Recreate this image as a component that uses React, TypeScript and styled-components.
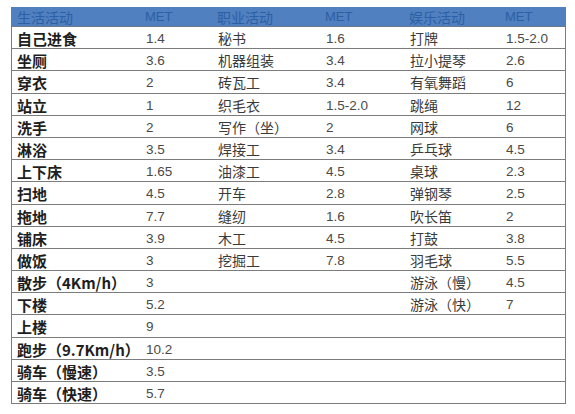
import { createGlobalStyle } from "styled-components";
import styled from "styled-components";

type Row = [string, string, string, string, string, string];

const rows: Row[] = [
  ["自己进食", "1.4", "秘书", "1.6", "打牌", "1.5-2.0"],
  ["坐厕", "3.6", "机器组装", "3.4", "拉小提琴", "2.6"],
  ["穿衣", "2", "砖瓦工", "3.4", "有氧舞蹈", "6"],
  ["站立", "1", "织毛衣", "1.5-2.0", "跳绳", "12"],
  ["洗手", "2", "写作（坐）", "2", "网球", "6"],
  ["淋浴", "3.5", "焊接工", "3.4", "乒乓球", "4.5"],
  ["上下床", "1.65", "油漆工", "4.5", "桌球", "2.3"],
  ["扫地", "4.5", "开车", "2.8", "弹钢琴", "2.5"],
  ["拖地", "7.7", "缝纫", "1.6", "吹长笛", "2"],
  ["铺床", "3.9", "木工", "4.5", "打鼓", "3.8"],
  ["做饭", "3", "挖掘工", "7.8", "羽毛球", "5.5"],
  ["散步（4Km/h）", "3", "", "", "游泳（慢）", "4.5"],
  ["下楼", "5.2", "", "", "游泳（快）", "7"],
  ["上楼", "9", "", "", "", ""],
  ["跑步（9.7Km/h）", "10.2", "", "", "", ""],
  ["骑车（慢速）", "3.5", "", "", "", ""],
  ["骑车（快速）", "5.7", "", "", "", ""],
];

const headers = ["生活活动", "MET", "职业活动", "MET", "娱乐活动", "MET"];

const GlobalStyle = createGlobalStyle`
  html, body {
    margin: 0;
    padding: 0;
    background: #ffffff;
  }
  body {
    font-family: "Liberation Sans", "Noto Sans CJK SC", sans-serif;
  }
`;

const Page = styled.div`
  width: 575px;
  height: 414px;
  padding: 7px 0 0 11px;
  box-sizing: border-box;
  overflow: hidden;
`;

const Table = styled.div`
  width: 555px;
  display: flex;
  flex-direction: column;
`;

const cols = "128px 72px 108px 84px 96px 67px";

const HeaderRow = styled.div`
  display: grid;
  grid-template-columns: ${cols};
  height: 20px;
  background: #5080bf;
  border-bottom: 1px solid #6a7a8c;
  box-sizing: border-box;
  align-items: center;
`;

const HeadCell = styled.div<{ $num?: boolean }>`
  padding-left: 6px;
  font-family: ${({ $num }) =>
    $num ? `"Liberation Sans", sans-serif` : `"Noto Sans CJK SC", sans-serif`};
  font-size: ${({ $num }) => ($num ? "13px" : "14px")};
  color: #2d5fa5;
  line-height: 20px;
  white-space: nowrap;
`;

const BodyRow = styled.div`
  display: grid;
  grid-template-columns: ${cols};
  height: 22.2px;
  border-left: 1px solid #7c7c7c;
  border-right: 1px solid #7c7c7c;
  border-bottom: 1px solid #7c7c7c;
  box-sizing: border-box;
  align-items: center;
`;

const Cell = styled.div<{ $kind: "main" | "text" | "num" }>`
  padding-left: ${({ $kind }) => ($kind === "main" ? "5px" : "6px")};
  padding-top: 1px;
  white-space: nowrap;
  line-height: 21px;
  font-family: ${({ $kind }) =>
    $kind === "num"
      ? `"Liberation Sans", sans-serif`
      : `"Noto Sans CJK SC", sans-serif`};
  font-size: ${({ $kind }) =>
    $kind === "main" ? "15px" : $kind === "num" ? "13.5px" : "14px"};
  font-weight: ${({ $kind }) => ($kind === "main" ? 700 : 400)};
  color: ${({ $kind }) =>
    $kind === "main" ? "#1e1e1e" : $kind === "num" ? "#4a4a4a" : "#3a3a3a"};
`;

const kinds: ("main" | "text" | "num")[] = ["main", "num", "text", "num", "text", "num"];

export default function App() {
  return (
    <>
      <GlobalStyle />
      <Page>
        <Table>
          <HeaderRow>
            {headers.map((h, i) => (
              <HeadCell key={i} $num={h === "MET"}>
                {h}
              </HeadCell>
            ))}
          </HeaderRow>
          {rows.map((r, i) => (
            <BodyRow key={i}>
              {r.map((c, j) => (
                <Cell key={j} $kind={kinds[j]}>
                  {c}
                </Cell>
              ))}
            </BodyRow>
          ))}
        </Table>
      </Page>
    </>
  );
}
